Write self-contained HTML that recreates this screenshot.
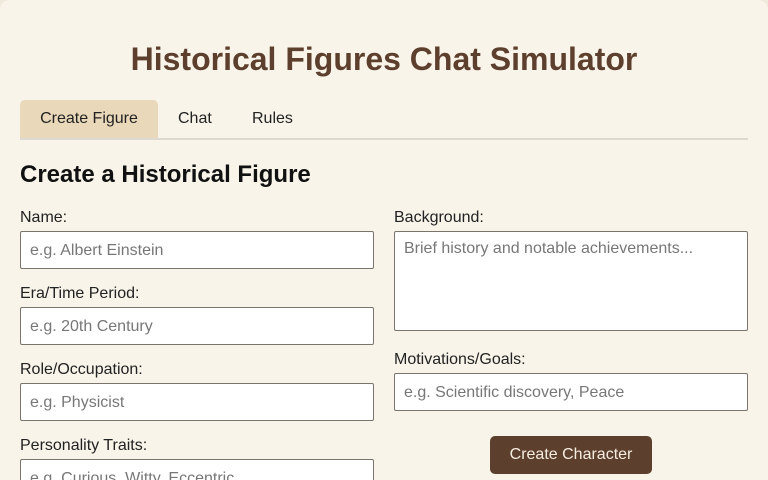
<!DOCTYPE html>
<html><head><style>
html,body{margin:0;padding:0;width:768px;height:480px;overflow:hidden;}
body{background:#efe9dc;font-family:"Liberation Sans",sans-serif;position:relative;}
.c{position:absolute;left:0;top:0;width:768px;height:480px;background:#f8f4e9;border-radius:10px 10px 0 0;overflow:hidden;}
h1{position:absolute;left:0;width:768px;top:40px;margin:0;text-align:center;font-size:32px;color:#5d3f2d;line-height:38px;}
.tabs{position:absolute;left:20px;top:100px;width:728px;height:38px;border-bottom:2px solid #dcd8d2;}
.tab{position:absolute;top:0;height:38px;line-height:38px;font-size:16px;color:#222;}
.t1{left:0;width:138px;background:#e9d8b9;text-align:center;border-radius:5px 5px 0 0;}
h2{position:absolute;left:20px;top:160px;margin:0;font-size:24px;line-height:30px;color:#111;}
.l{position:absolute;font-size:16px;color:#222;line-height:18px;}
.i{position:absolute;box-sizing:border-box;height:38px;width:354px;background:#fff;border:1px solid #7a746c;border-radius:2px;font-size:16px;color:#777;padding:0 9px;line-height:37px;}
.b{position:absolute;left:490px;top:436px;width:162px;height:38px;background:#5d3f2d;color:#f5ede0;border-radius:5px;text-align:center;line-height:38px;font-size:16px;}
</style></head><body><div class="c">
<h1>Historical Figures Chat Simulator</h1>
<div class="tabs"><div class="tab t1">Create Figure</div><div class="tab" style="left:158px">Chat</div><div class="tab" style="left:232px">Rules</div></div>
<h2>Create a Historical Figure</h2>
<div class="l" style="left:20px;top:209px">Name:</div>
<div class="i" style="left:20px;top:231px">e.g. Albert Einstein</div>
<div class="l" style="left:20px;top:285px">Era/Time Period:</div>
<div class="i" style="left:20px;top:307px">e.g. 20th Century</div>
<div class="l" style="left:20px;top:361px">Role/Occupation:</div>
<div class="i" style="left:20px;top:383px">e.g. Physicist</div>
<div class="l" style="left:20px;top:437px">Personality Traits:</div>
<div class="i" style="left:20px;top:459px">e.g. Curious, Witty, Eccentric</div>
<div class="l" style="left:394px;top:209px">Background:</div>
<div class="i" style="left:394px;top:231px;height:100px;line-height:18px;padding-top:8px">Brief history and notable achievements...</div>
<div class="l" style="left:394px;top:351px">Motivations/Goals:</div>
<div class="i" style="left:394px;top:373px">e.g. Scientific discovery, Peace</div>
<div class="b">Create Character</div>
</div></body></html>
